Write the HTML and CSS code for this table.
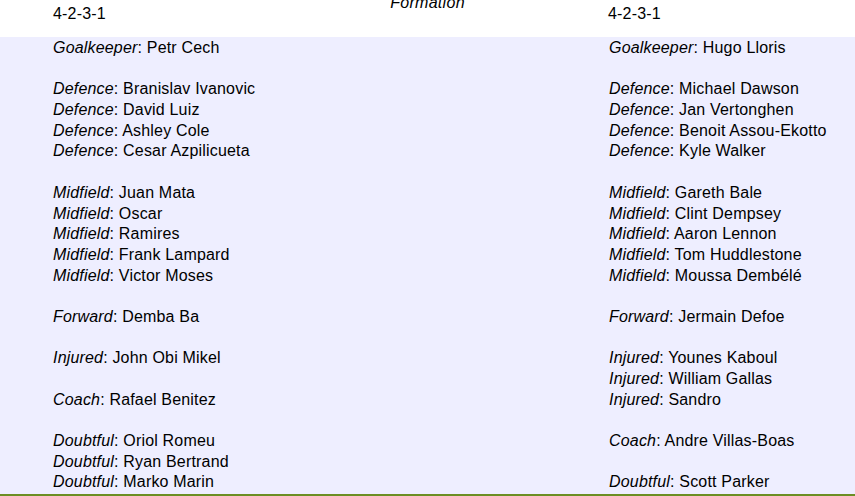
FILE: index.html
```html
<!DOCTYPE html>
<html>
<head>
<meta charset="utf-8">
<link rel="stylesheet" href="styles.css">
</head>
<body>
<div class="sheet">
  <div class="head">
    <div class="hcell left">4-2-3-1</div>
    <div class="hcell mid">Formation</div>
    <div class="hcell right">4-2-3-1</div>
  </div>
  <div class="body">
    <div class="col left">
      <div class="ln"><i>Goalkeeper</i>: Petr Cech</div>
      <div class="ln gap"></div>
      <div class="ln"><i>Defence</i>: Branislav Ivanovic</div>
      <div class="ln"><i>Defence</i>: David Luiz</div>
      <div class="ln"><i>Defence</i>: Ashley Cole</div>
      <div class="ln"><i>Defence</i>: Cesar Azpilicueta</div>
      <div class="ln gap"></div>
      <div class="ln"><i>Midfield</i>: Juan Mata</div>
      <div class="ln"><i>Midfield</i>: Oscar</div>
      <div class="ln"><i>Midfield</i>: Ramires</div>
      <div class="ln"><i>Midfield</i>: Frank Lampard</div>
      <div class="ln"><i>Midfield</i>: Victor Moses</div>
      <div class="ln gap"></div>
      <div class="ln"><i>Forward</i>: Demba Ba</div>
      <div class="ln gap"></div>
      <div class="ln"><i>Injured</i>: John Obi Mikel</div>
      <div class="ln gap"></div>
      <div class="ln"><i>Coach</i>: Rafael Benitez</div>
      <div class="ln gap"></div>
      <div class="ln"><i>Doubtful</i>: Oriol Romeu</div>
      <div class="ln"><i>Doubtful</i>: Ryan Bertrand</div>
      <div class="ln"><i>Doubtful</i>: Marko Marin</div>
    </div>
    <div class="col right">
      <div class="ln"><i>Goalkeeper</i>: Hugo Lloris</div>
      <div class="ln gap"></div>
      <div class="ln"><i>Defence</i>: Michael Dawson</div>
      <div class="ln"><i>Defence</i>: Jan Vertonghen</div>
      <div class="ln"><i>Defence</i>: Benoit Assou-Ekotto</div>
      <div class="ln"><i>Defence</i>: Kyle Walker</div>
      <div class="ln gap"></div>
      <div class="ln"><i>Midfield</i>: Gareth Bale</div>
      <div class="ln"><i>Midfield</i>: Clint Dempsey</div>
      <div class="ln"><i>Midfield</i>: Aaron Lennon</div>
      <div class="ln"><i>Midfield</i>: Tom Huddlestone</div>
      <div class="ln"><i>Midfield</i>: Moussa Dembélé</div>
      <div class="ln gap"></div>
      <div class="ln"><i>Forward</i>: Jermain Defoe</div>
      <div class="ln gap"></div>
      <div class="ln"><i>Injured</i>: Younes Kaboul</div>
      <div class="ln"><i>Injured</i>: William Gallas</div>
      <div class="ln"><i>Injured</i>: Sandro</div>
      <div class="ln gap"></div>
      <div class="ln"><i>Coach</i>: Andre Villas-Boas</div>
      <div class="ln gap"></div>
      <div class="ln"><i>Doubtful</i>: Scott Parker</div>
    </div>
  </div>
</div>
</body>
</html>
```

FILE: styles.css
```css
html, body {
  margin: 0;
  padding: 0;
  background: #ffffff;
  overflow: hidden;
}
.sheet {
  width: 855px;
  height: 496px;
  font-family: "Liberation Sans", Arial, sans-serif;
  font-size: 16px;
  letter-spacing: 0.18px;
  color: #000;
  overflow: hidden;
  display: flex;
  flex-direction: column;
}
.head {
  height: 37px;
  display: grid;
  grid-template-columns: 555px 1fr;
  position: relative;
  background: #fff;
}
.hcell {
  line-height: 20px;
}
.hcell.left {
  padding: 4px 0 0 53px;
}
.hcell.right {
  padding: 4px 0 0 53px;
}
.hcell.mid {
  position: absolute;
  left: 0;
  right: 0;
  top: -7px;
  text-align: center;
  font-style: italic;
  letter-spacing: 0.3px;
}
.body {
  flex: 1;
  background: #eeeeff;
  border-bottom: 2px solid #6b8e23;
  display: grid;
  grid-template-columns: 555px 1fr;
  align-items: start;
  padding-top: 1px;
}
.col {
  padding-left: 53px;
}
.col.right {
  padding-left: 54px;
}
.ln {
  height: 20.7px;
  line-height: 20.7px;
  white-space: nowrap;
}
```
